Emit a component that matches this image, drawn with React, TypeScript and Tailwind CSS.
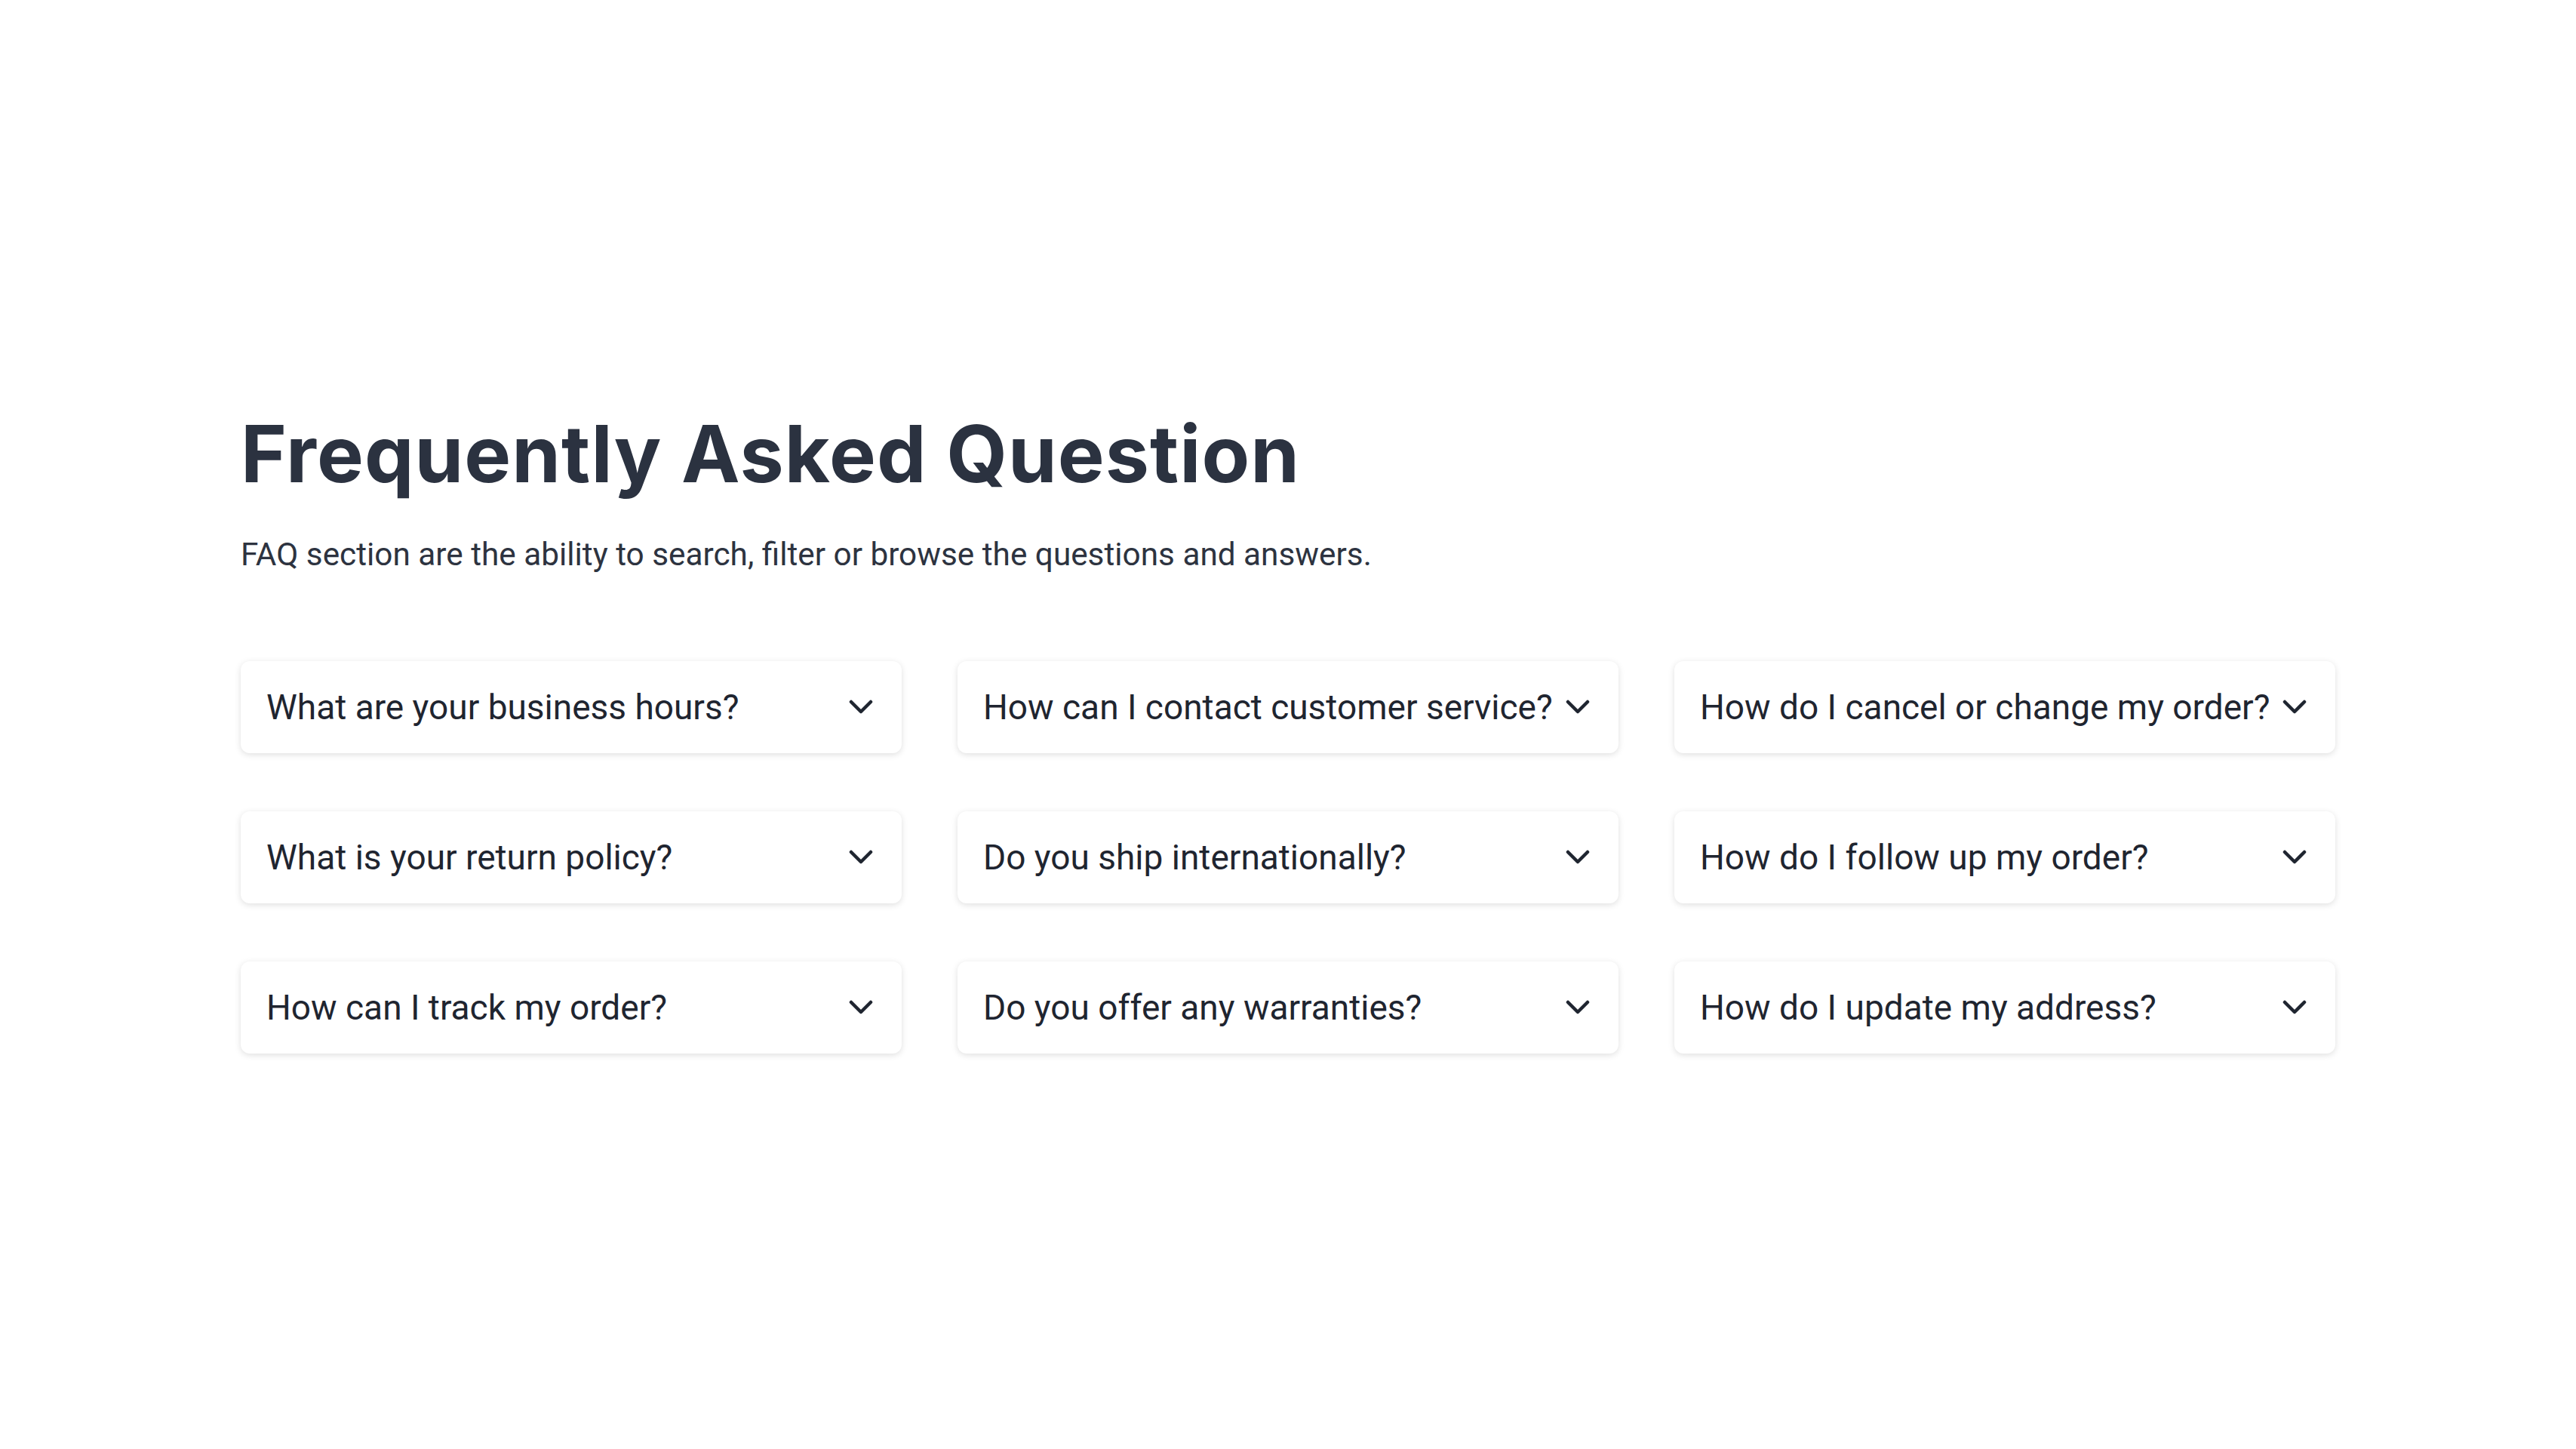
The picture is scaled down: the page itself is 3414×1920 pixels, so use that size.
import React from "react";

const questions = [
  "What are your business hours?",
  "How can I contact customer service?",
  "How do I cancel or change my order?",
  "What is your return policy?",
  "Do you ship internationally?",
  "How do I follow up my order?",
  "How can I track my order?",
  "Do you offer any warranties?",
  "How do I update my address?",
];

function Chevron() {
  return (
    <svg width="32" height="20" viewBox="0 0 32 20" fill="none" className="shrink-0">
      <polyline points="3,3 16,16 29,3" stroke="#1f2530" strokeWidth="4.5" strokeLinecap="round" strokeLinejoin="round" />
    </svg>
  );
}

export default function App() {
  return (
    <div className="min-h-screen w-full bg-white">
      <div className="mx-auto w-[2776px] pt-[541px]">
        <h1
          className="text-[104px] leading-[120px] font-bold tracking-[0.01em] text-[#2b3240]"
          style={{ fontFamily: "Inter, 'Noto Sans', sans-serif" }}
        >
          Frequently Asked Question
        </h1>
        <p
          className="mt-[50px] text-[42.3px] leading-[48px] text-[#2d3340]"
          style={{ fontFamily: "Roboto, sans-serif" }}
        >
          FAQ section are the ability to search, filter or browse the questions and answers.
        </p>
        <div className="mt-[117px] grid grid-cols-3 gap-x-[74px] gap-y-[77px]">
          {questions.map((q) => (
            <button
              key={q}
              className="flex h-[122px] items-center justify-between gap-[8px] rounded-[12px] bg-white pl-[34px] pr-[38px] text-left shadow-[0_2px_8px_rgba(0,0,0,0.13)]"
              style={{ fontFamily: "Roboto, sans-serif" }}
            >
              <span className="whitespace-nowrap text-[46px] text-[#1f2530]">{q}</span>
              <Chevron />
            </button>
          ))}
        </div>
      </div>
    </div>
  );
}
